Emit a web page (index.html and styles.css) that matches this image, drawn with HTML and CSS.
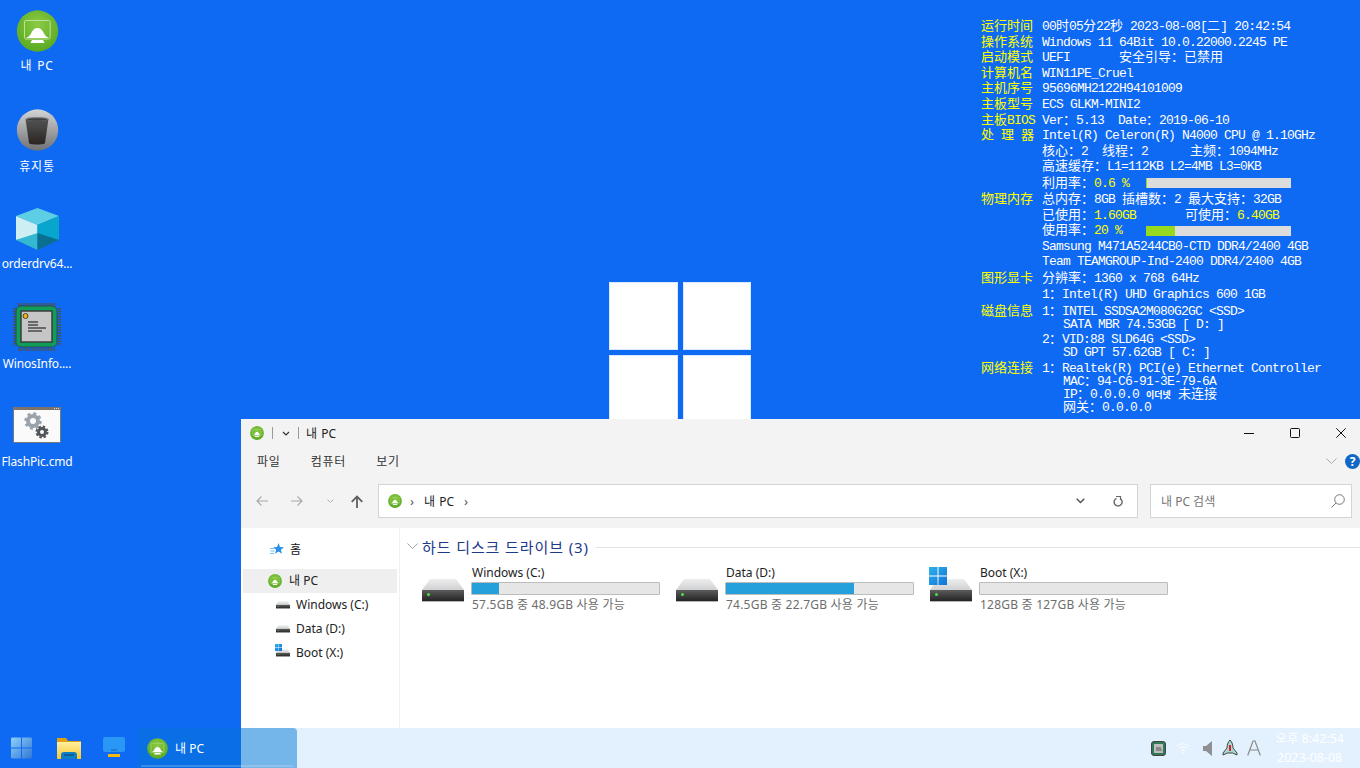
FILE: index.html
```html
<!DOCTYPE html>
<html lang="ko">
<head>
<meta charset="utf-8">
<title>내 PC</title>
<link rel="stylesheet" href="styles.css">
</head>
<body>
<svg class="sprite" xmlns="http://www.w3.org/2000/svg">
  <defs>
    <radialGradient id="gGreen" cx="50%" cy="35%" r="70%"><stop offset="0" stop-color="#8ccb45"/><stop offset="1" stop-color="#55a71f"/></radialGradient>
    <linearGradient id="gGrey" x1="0" y1="0" x2="0" y2="1"><stop offset="0" stop-color="#d2d4d6"/><stop offset="1" stop-color="#6f7174"/></linearGradient>
    <linearGradient id="gCup" x1="0" y1="0" x2="0" y2="1"><stop offset="0" stop-color="#565656"/><stop offset="1" stop-color="#2a2424"/></linearGradient>
    <linearGradient id="gTop" x1="0" y1="0" x2="0" y2="1"><stop offset="0" stop-color="#eeeeee"/><stop offset="1" stop-color="#cfd0d2"/></linearGradient>
    <linearGradient id="gBody" x1="0" y1="0" x2="0" y2="1"><stop offset="0" stop-color="#5c5c5c"/><stop offset="1" stop-color="#242424"/></linearGradient>
    <linearGradient id="gStart" x1="0" y1="0" x2="1" y2="1"><stop offset="0" stop-color="#8fd0f6"/><stop offset="1" stop-color="#2f77d8"/></linearGradient>
    <linearGradient id="gFolder" x1="0" y1="0" x2="0" y2="1"><stop offset="0" stop-color="#fff0a0"/><stop offset="1" stop-color="#fbc52c"/></linearGradient>
    <linearGradient id="gWin" x1="0" y1="0" x2="1" y2="1"><stop offset="0" stop-color="#2fb0ea"/><stop offset="1" stop-color="#0f75d8"/></linearGradient>
    <symbol id="i-pc" viewBox="0 0 42 42">
      <circle cx="21" cy="21" r="20.7" fill="url(#gGreen)"/>
      <rect x="8" y="10.500" width="25.600" height="18.500" rx="1.500" fill="none" stroke="#bfe29a" stroke-width="1"/>
      <path d="M9.500 28c2-1 3.500-1.500 5-4.500 1.500-3.500 3.500-5.500 6.500-5.500s5 2 6.500 5.500c1.500 3 3 3.500 5 4.500z" fill="#fff"/>
      <path d="M15.500 30h11l1.500 3h-14z" fill="#fff"/>
    </symbol>
    <symbol id="i-trash" viewBox="0 0 42 42">
      <circle cx="21" cy="21" r="20.7" fill="url(#gGrey)"/>
      <path d="M9 10c2-2 21-2 23 0l-3.500 24c-.5 2-15.500 2-16 0z" fill="url(#gCup)"/>
      <ellipse cx="20.500" cy="10" rx="11.500" ry="2" fill="#7c8084"/>
      <ellipse cx="20.500" cy="10.500" rx="10" ry="1.300" fill="#3d3d3d"/>
    </symbol>
    <symbol id="i-cube" viewBox="0 0 43 42">
      <path d="M21.500 0 43 8 21.500 17 0 8z" fill="#5dcfe4"/>
      <path d="M0 8 21.500 17v10L0 32z" fill="#cdeff3"/>
      <path d="M43 8 21.500 17v10L43 32z" fill="#08a6cc"/>
      <path d="M0 32 21.500 25v17z" fill="#33b8cf"/>
      <path d="M43 32 21.500 25v17z" fill="#0b708f"/>
    </symbol>
    <symbol id="i-chip" viewBox="0 0 48 48">
      <path d="M5 1.500h38M5 46.500h38M1.500 5v38M46.500 5v38" stroke="#4a5257" stroke-width="3" stroke-dasharray="1.500 1.200" fill="none"/>
      <rect x="3" y="3" width="41" height="41" rx="5" fill="#0f9d58" stroke="#33484a"/>
      <rect x="8" y="8" width="31" height="31" fill="#c6c6c6" stroke="#3c3c3c" stroke-width="1.500"/>
      <circle cx="12.500" cy="13" r="2.500" fill="#f2b705" stroke="#444"/>
      <path d="M15 19h10M15 22h10M15 25h18M15 28h14" stroke="#4a4a4a" stroke-width="1.500"/>
    </symbol>
    <symbol id="i-cmd" viewBox="0 0 48 36">
      <rect x=".5" y=".5" width="47" height="35" rx="1" fill="#fafafa" stroke="#777"/>
      <rect width="48" height="3" fill="#7b7268"/>
      <path d="M41 1.500h1M43 1.500h1M45 1.500h1" stroke="#ddd"/>
      <circle cx="20" cy="14" r="5" fill="none" stroke="#9aa3ab" stroke-width="4"/>
      <circle cx="20" cy="14" r="7.500" fill="none" stroke="#9aa3ab" stroke-width="2.500" stroke-dasharray="3 2.890"/>
      <circle cx="29" cy="25" r="3.500" fill="none" stroke="#50565b" stroke-width="3"/>
      <circle cx="29" cy="25" r="5.500" fill="none" stroke="#50565b" stroke-width="2" stroke-dasharray="2.500 1.820"/>
    </symbol>
    <symbol id="i-drive" viewBox="0 0 42 23">
      <path d="M8 0h26l8 11H0z" fill="url(#gTop)"/>
      <rect y="11" width="42" height="11" fill="url(#gBody)"/>
      <rect y="22" width="42" height="1" fill="#b5b5b5"/>
      <rect x="5" y="14" width="3" height="3" rx="1.500" fill="#4ee04a"/>
    </symbol>
    <symbol id="i-winlogo" viewBox="0 0 18 18">
      <path d="M0 0h8.500v8.500H0zM9.500 0H18v8.500H9.500zM0 9.500h8.500V18H0zM9.500 9.500H18V18H9.500z" fill="url(#gWin)"/>
    </symbol>
  </defs>
</svg>

<div class="desktop">
  <div class="stage">
    <ul class="icons">
      <li class="dicon"><svg class="dicon-img"><use href="#i-pc"/></svg><span class="ko-wide up1">내 PC</span></li>
      <li class="dicon"><svg class="dicon-img"><use href="#i-trash"/></svg><span class="ko-wide down1">휴지통</span></li>
      <li class="dicon"><svg class="dicon-img"><use href="#i-cube"/></svg><span class="up1">orderdrv64...</span></li>
      <li class="dicon"><svg class="dicon-img chip"><use href="#i-chip"/></svg><span>WinosInfo....</span></li>
      <li class="dicon"><svg class="dicon-img cmd"><use href="#i-cmd"/></svg><span class="down1">FlashPic.cmd</span></li>
    </ul>

    <div class="logo"><i></i><i></i><i></i><i></i></div>

    <div class="info" lang="zh-CN">
      <div class="row"><b><i>运行时间</i></b><span>00<i>时</i>05<i>分</i>22<i>秒</i> 2023-08-08[<i>二</i>] 20:42:54</span></div>
      <div class="row"><b><i>操作系统</i></b><span>Windows 11 64Bit 10.0.22000.2245 PE</span></div>
      <div class="row"><b><i>启动模式</i></b><span>UEFI       <i>安全引导：已禁用</i></span></div>
      <div class="row"><b><i>计算机名</i></b><span>WIN11PE_Cruel</span></div>
      <div class="row"><b><i>主机序号</i></b><span>95696MH2122H94101009</span></div>
      <div class="row"><b><i>主板型号</i></b><span>ECS GLKM-MINI2</span></div>
      <div class="row"><b><i>主板</i>BIOS</b><span>Ver<i>：</i>5.13  Date<i>：</i>2019-06-10</span></div>
      <div class="row"><b><i>处</i> <i>理</i> <i>器</i></b><span>Intel(R) Celeron(R) N4000 CPU @ 1.10GHz</span></div>
      <div class="row"><b></b><span><i>核心：</i>2  <i>线程：</i>2      <i>主频：</i>1094MHz</span></div>
      <div class="row"><b></b><span><i>高速缓存：</i>L1=112KB L2=4MB L3=0KB</span></div>
      <div class="row h17"><b></b><span class="usage"><span class="usage-text"><i>利用率：</i><em>0.6 %</em></span><span class="bar"><span class="bar-fill" style="width:0.6%"></span></span></span></div>
      <div class="row"><b><i>物理内存</i></b><span><i>总内存：</i>8GB <i>插槽数：</i>2 <i>最大支持：</i>32GB</span></div>
      <div class="row"><b></b><span><i>已使用：</i><em>1.60GB</em>       <i>可使用：</i><em>6.40GB</em></span></div>
      <div class="row"><b></b><span class="usage"><span class="usage-text"><i>使用率：</i><em>20 %</em></span><span class="bar"><span class="bar-fill" style="width:20%"></span></span></span></div>
      <div class="row"><b></b><span>Samsung M471A5244CB0-CTD DDR4/2400 4GB</span></div>
      <div class="row h17"><b></b><span>Team TEAMGROUP-Ind-2400 DDR4/2400 4GB</span></div>
      <div class="row"><b><i>图形显卡</i></b><span><i>分辨率：</i>1360 x 768 64Hz</span></div>
      <div class="row h18"><b></b><span>1<i>：</i>Intel(R) UHD Graphics 600 1GB</span></div>
      <div class="row h13"><b><i>磁盘信息</i></b><span>1<i>：</i>INTEL SSDSA2M080G2GC &lt;SSD&gt;</span></div>
      <div class="row h15"><b></b><span class="sub">SATA MBR 74.53GB [ D: ]</span></div>
      <div class="row h13"><b></b><span>2<i>：</i>VID:88 SLD64G &lt;SSD&gt;</span></div>
      <div class="row h16"><b></b><span class="sub">SD GPT 57.62GB [ C: ]</span></div>
      <div class="row h13"><b><i>网络连接</i></b><span>1<i>：</i>Realtek(R) PCI(e) Ethernet Controller</span></div>
      <div class="row h13"><b></b><span class="sub">MAC<i>：</i>94-C6-91-3E-79-6A</span></div>
      <div class="row h13"><b></b><span class="sub">IP<i>：</i>0.0.0.0 <u lang="ko">이더넷</u> <i>未连接</i></span></div>
      <div class="row h13"><b></b><span class="sub"><i>网关：</i>0.0.0.0</span></div>
    </div>

    <section class="window">
      <header class="title">
        <svg class="ic14"><use href="#i-pc"/></svg>
        <span class="vsep"></span>
        <svg class="glyph qat" viewBox="0 0 8 5"><path d="M1 1l3 3 3-3" fill="none" stroke="#333" stroke-width="1.200"/></svg>
        <span class="vsep"></span>
        <span class="title-text">내 PC</span>
        <div class="controls">
          <svg class="ctl" viewBox="0 0 10 10"><path d="M0 5.500h10" stroke="#111" stroke-width="1"/></svg>
          <svg class="ctl" viewBox="0 0 10 10"><rect x=".5" y=".5" width="9" height="9" rx="1" fill="none" stroke="#111"/></svg>
          <svg class="ctl" viewBox="0 0 10 10"><path d="M.3.3l9.400 9.400M9.700.3L.3 9.700" stroke="#111" stroke-width="1"/></svg>
        </div>
      </header>
      <nav class="menu">
        <span class="menu-dark">파일</span><span>컴퓨터</span><span>보기</span>
        <div class="menu-right">
          <svg class="collapse" viewBox="0 0 11 6"><path d="M.5.500l5 5 5-5" fill="none" stroke="#a9a9a9"/></svg>
          <span class="help">?</span>
        </div>
      </nav>
      <div class="navbar">
        <svg class="arrow" viewBox="0 0 12 10"><path d="M12 5H1M5.500.500L1 5l4.500 4.500" fill="none" stroke="#a8a8a8" stroke-width="1.100"/></svg>
        <svg class="arrow fwd" viewBox="0 0 12 10"><path d="M0 5h11M6.500.500L11 5 6.500 9.500" fill="none" stroke="#a8a8a8" stroke-width="1.100"/></svg>
        <svg class="mini" viewBox="0 0 7 4"><path d="M.5.500l3 3 3-3" fill="none" stroke="#b0b0b0"/></svg>
        <svg class="arrow up" viewBox="0 0 12 13"><path d="M6 13V1.500M.7 6.800L6 1.500l5.300 5.300" fill="none" stroke="#5f5f5f" stroke-width="1.800"/></svg>
        <div class="address">
          <svg class="ic14"><use href="#i-pc"/></svg>
          <span class="crumb-sep">›</span><span class="crumb">내 PC</span><span class="crumb-sep">›</span>
          <div class="address-right">
            <svg class="addr-drop" viewBox="0 0 9 6"><path d="M.7.700L4.500 4.500 8.300.700" fill="none" stroke="#555" stroke-width="1.500"/></svg>
            <svg class="addr-refresh" viewBox="0 0 10 11"><path d="M7.800 3A4 4 0 1 1 3.500 2.300" fill="none" stroke="#666" stroke-width="1.400"/><path d="M3 .5h4.500V4" fill="none" stroke="#666" stroke-width="1.200"/></svg>
          </div>
        </div>
        <div class="search">
          <span>내 PC 검색</span>
          <svg class="search-ic" viewBox="0 0 14 14"><circle cx="8.500" cy="5.500" r="4.800" fill="none" stroke="#777"/><path d="M5 9l-4.500 4.500" stroke="#777"/></svg>
        </div>
      </div>
      <div class="body">
        <aside class="side">
          <div class="side-row home">
            <svg class="star" viewBox="0 0 14 13"><path d="M8.500 0l1.500 4 4 .3-3.100 2.500 1 4-3.400-2.300-3.400 2.300 1-4-3-2.500 4-.3z" fill="#2a8fe6"/><path d="M0 5.500h4M.5 8h4M0 10.500h4" stroke="#7cc0f0"/></svg>
            <span>홈</span>
          </div>
          <div class="side-row pc selected"><svg class="ic14"><use href="#i-pc"/></svg><span>내 PC</span></div>
          <div class="side-row drv"><svg class="drv-ic"><use href="#i-drive"/></svg><span>Windows (C:)</span></div>
          <div class="side-row drv"><svg class="drv-ic"><use href="#i-drive"/></svg><span>Data (D:)</span></div>
          <div class="side-row drv boot"><svg class="side-win" viewBox="0 0 18 18"><use href="#i-winlogo"/></svg><svg class="drv-ic"><use href="#i-drive"/></svg><span>Boot (X:)</span></div>
        </aside>
        <main class="main">
          <div class="group">
            <svg class="group-chev" viewBox="0 0 11 6"><path d="M.5.500l5 5 5-5" fill="none" stroke="#a0a0a0"/></svg>
            <span class="group-name">하드 디스크 드라이브 (3)</span>
            <span class="group-line"></span>
          </div>
          <div class="tiles">
            <article class="tile">
              <svg class="tile-ic"><use href="#i-drive"/></svg>
              <div class="tile-text"><div class="tile-name">Windows (C:)</div><div class="meter"><div class="meter-fill" style="width:14.500%"></div></div><div class="tile-cap">57.5GB 중 48.9GB 사용 가능</div></div>
            </article>
            <article class="tile">
              <svg class="tile-ic"><use href="#i-drive"/></svg>
              <div class="tile-text"><div class="tile-name">Data (D:)</div><div class="meter"><div class="meter-fill" style="width:68.700%"></div></div><div class="tile-cap">74.5GB 중 22.7GB 사용 가능</div></div>
            </article>
            <article class="tile">
              <svg class="tile-win"><use href="#i-winlogo"/></svg>
              <svg class="tile-ic"><use href="#i-drive"/></svg>
              <div class="tile-text"><div class="tile-name">Boot (X:)</div><div class="meter"></div><div class="tile-cap">128GB 중 127GB 사용 가능</div></div>
            </article>
          </div>
        </main>
      </div>
    </section>
  </div>

  <footer class="taskbar">
    <div class="tb-left">
      <svg class="tb-start" viewBox="0 0 22 22"><path d="M0 1.500A1.500 1.500 0 0 1 1.500 0h9v10.500H0zM11.500 0h9A1.500 1.500 0 0 1 22 1.500v9H11.500zM0 11.500h10.500V22h-9A1.500 1.500 0 0 1 0 20.500zM11.500 11.500H22v9a1.500 1.500 0 0 1-1.500 1.500h-9z" fill="url(#gStart)"/></svg>
      <svg class="tb-ic tb-folder" viewBox="0 0 24 22"><path d="M0 1h9l2 3h13v18H0z" fill="#e0a010"/><path d="M0 5h24v17H0z" fill="url(#gFolder)"/><path d="M4 22v-4a3 3 0 0 1 3-3h10a3 3 0 0 1 3 3v4z" fill="#0f7ec4"/><path d="M7 18h10" stroke="#0a3f6e"/></svg>
      <svg class="tb-ic tb-desk" viewBox="0 0 22 22"><rect width="22" height="15" rx="2" fill="#2897f5"/><path d="M8 13h6" stroke="#1d5fb0"/><rect x="5" y="17" width="12" height="3" fill="#f2b90f"/></svg>
    </div>
    <div class="tb-app">
      <svg class="tb-app-ic"><use href="#i-pc"/></svg>
      <span>내 PC</span>
    </div>
    <div class="tray">
      <svg class="tray-ic" viewBox="0 0 15 15"><rect x=".5" y=".5" width="14" height="14" rx="2.500" fill="#2f7a58" stroke="#444"/><rect x="3" y="3" width="9" height="9" fill="#bdbdbd"/><path d="M5 7h5M5 9h6" stroke="#555"/></svg>
      <svg class="tray-ic wifi" viewBox="0 0 16 13"><path d="M1 4.500a10 10 0 0 1 14 0M3.500 7a6.500 6.500 0 0 1 9 0M6 9.500a3 3 0 0 1 4 0" fill="none" stroke="#fff" stroke-width="1.200"/><circle cx="8" cy="11.500" r="1" fill="#fff"/></svg>
      <svg class="tray-ic sound" viewBox="0 0 9 15"><path d="M0 5h3l6-5v15l-6-5H0z" fill="#8d8f91"/></svg>
      <svg class="tray-ic rocket" viewBox="0 0 16 16"><path d="M8 0c2.500 2.500 3 5.500 3 8l4 5v2l-4.500-2h-5L1 15v-2l4-5c0-2.500.5-5.500 3-8z" fill="#a9d8cf" stroke="#222" stroke-width=".8"/><path d="M7 5h2v6H7z" fill="#e0202a"/></svg>
      <svg class="tray-ic aglyph" viewBox="0 0 14 16"><path d="M.7 15.500L6 1h2l5.300 14.500M3 10h8" fill="none" stroke="#8a8a8a" stroke-width="1.200"/></svg>
      <div class="clock"><span>오후 8:42:54</span><span>2023-08-08</span></div>
    </div>
  </footer>
</div>
</body>
</html>
```
FILE: styles.css
```css
* { box-sizing: border-box; }
html, body { margin: 0; padding: 0; }
body {
  width: 1360px;
  height: 768px;
  overflow: hidden;
  background: #0e69f3;
  font-family: "Noto Sans", "Noto Sans CJK KR", sans-serif;
  font-size: 12px;
  color: #222;
}
svg { display: block; flex: none; }
.sprite { position: absolute; width: 0; height: 0; }

.desktop { display: flex; flex-direction: column; width: 1360px; height: 768px; }
.stage { position: relative; height: 728px; flex: none; }

/* desktop icons */
.icons { list-style: none; margin: 0; padding: 10px 0 0; width: 74px; display: flex; flex-direction: column; }
.dicon { height: 99px; display: flex; flex-direction: column; align-items: center; color: #fff; line-height: 17px; white-space: nowrap; }
.dicon-img { width: 43px; height: 42px; margin-bottom: 5px; }
.dicon-img.chip { width: 48px; height: 48px; margin-top: -4px; margin-bottom: 3px; }
.dicon-img.cmd { width: 48px; height: 36px; margin-bottom: 8px; margin-top: 1px; }
.dicon span { margin-top: 1px; letter-spacing: -.15px; }
.dicon .up1 { margin-top: 0; }
.dicon .down1 { margin-top: 2px; }
.dicon .ko-wide { letter-spacing: .8px; word-spacing: 1px; }

/* centre boot logo */
.logo { position: absolute; left: 609px; top: 282px; display: grid; grid-template-columns: 69px 68px; grid-template-rows: 68px 68px; gap: 5px; }
.logo i { background: #fff; box-shadow: inset 0 0 0 1px #d8e8ff; }

/* system info overlay */
.info {
  position: absolute;
  left: 981px;
  top: 19px;
  display: flex;
  flex-direction: column;
  font-family: "Liberation Mono", "Noto Sans CJK SC", monospace;
  font-size: 13px;
  letter-spacing: -.8px;
  color: #fff;
  white-space: pre;
}
.row { display: grid; grid-template-columns: 61px 1fr; height: 15.6px; line-height: 15.6px; flex: none; }
.row.h17 { height: 17px; }
.row.h18 { height: 18.5px; }
.row.h13 { height: 13px; line-height: 13px; }
.row.h15 { height: 15px; line-height: 13px; }
.row.h16 { height: 16px; line-height: 13px; }
.row b { font-weight: 400; color: #ff0; }
.row i { font-family: "Noto Sans CJK SC", sans-serif; font-style: normal; font-size: 13px; letter-spacing: 0; line-height: 0; }
.row em { font-style: normal; color: #ff0; }
.row u { font-family: "Noto Sans CJK KR", sans-serif; text-decoration: none; font-size: 9px; font-weight: 700; letter-spacing: 0; line-height: 0; }
.sub { padding-left: 21px; }
.usage { display: flex; align-items: center; }
.usage-text { width: 104px; }
.bar { width: 145px; height: 10px; background: #dcdcdc; }
.bar-fill { display: block; height: 100%; background: #97d91f; }

/* explorer window */
.window {
  position: absolute;
  left: 241px;
  top: 419px;
  width: 1119px;
  height: 309px;
  background: #f3f3f3;
  overflow: hidden;
  display: flex;
  flex-direction: column;
}
.title { height: 28px; display: flex; align-items: center; padding-left: 9px; flex: none; }
.ic14 { width: 14px; height: 14px; }
.vsep { width: 1px; height: 12px; background: #9a9a9a; margin-left: 8px; }
.qat { width: 8px; height: 5px; margin-left: 9px; margin-right: -4px; }
.qat + .vsep { margin-left: 12px; }
.title-text { margin-left: 7px; word-spacing: 1px; }
.controls { margin-left: auto; display: flex; gap: 36px; padding-right: 14px; margin-top: -1px; }
.ctl { width: 10px; height: 10px; }

.menu { height: 28px; display: flex; align-items: center; padding-left: 16px; flex: none; color: #333; }
.menu > span { margin-right: 30px; letter-spacing: .8px; }
.menu-right { margin-left: auto; display: flex; align-items: center; gap: 8px; }
.collapse { width: 11px; height: 6px; }
.help { width: 15px; height: 15px; border-radius: 50%; background: #1267c4; color: #fff; font-weight: 700; font-size: 12px; line-height: 15px; text-align: center; }

.navbar { height: 53px; display: flex; align-items: flex-start; padding-top: 9px; flex: none; }
.arrow { width: 12px; height: 10px; margin-top: 12px; margin-left: 15px; }
.arrow.fwd { margin-left: 23px; }
.mini { width: 7px; height: 4px; margin-top: 15px; margin-left: 24px; }
.arrow.up { height: 13px; margin-left: 17px; margin-top: 11px; }
.address {
  margin-left: 15px;
  width: 760px;
  height: 34px;
  background: #fff;
  border: 1px solid #d4d4d4;
  display: flex;
  align-items: center;
  padding-left: 9px;
}
.crumb-sep { margin-left: 8px; color: #555; font-size: 13px; }
.crumb { margin-left: 10px; margin-right: 2px; word-spacing: 1px; }
.address-right { margin-left: auto; display: flex; align-items: center; gap: 28px; padding-right: 14px; }
.addr-drop { width: 9px; height: 6px; }
.addr-refresh { width: 10px; height: 11px; }
.search {
  margin-left: 12px;
  width: 202px;
  height: 34px;
  background: #fff;
  border: 1px solid #d4d4d4;
  display: flex;
  align-items: center;
  justify-content: space-between;
  padding: 0 6px 0 10px;
  color: #767676;
}
.search-ic { width: 14px; height: 14px; }

.body { flex: 1; display: flex; background: #fff; min-height: 0; }
.side { width: 159px; border-right: 1px solid #f0f0f0; padding: 9px 1px 0 2px; flex: none; }
.side-row { height: 24px; display: flex; align-items: center; position: relative; width: 154px; }
.side-row span { margin-top: -2px; }
.home { padding-left: 27px; gap: 6px; margin-bottom: 8px; color: #111; }
.home span { margin-top: 0; }
.star { width: 14px; height: 13px; }
.pc { padding-left: 25px; gap: 7px; }
.selected { background: #efefef; }
.drv { padding-left: 33px; gap: 6px; }
.drv-ic { width: 14px; height: 8px; }
.side-win { position: absolute; left: 32px; top: 3px; width: 7px; height: 7px; }

.main { flex: 1; padding-left: 7px; min-width: 0; }
.group { height: 36px; display: flex; align-items: center; }
.group-chev { width: 11px; height: 6px; }
.group-name { margin-left: 4px; font-size: 15px; letter-spacing: .9px; color: #1c3a8c; white-space: nowrap; }
.group-line { flex: 1; height: 1px; background: #e3e3e3; margin: 2px 0 0 7px; }
.tiles { display: grid; grid-template-columns: repeat(3, 254px); padding-left: 15px; }
.tile { display: flex; gap: 7px; position: relative; }
.tile-ic { width: 42px; height: 23px; margin-top: 15px; }
.tile-win { position: absolute; left: -1px; top: 3px; width: 18px; height: 18px; z-index: 1; }
.tile-text { width: 190px; }
.tile-name { line-height: 17px; height: 17px; margin-left: 1px; color: #222; }
.meter { width: 189px; height: 13px; margin-top: 1px; background: #e6e6e6; border: 1px solid #bcbcbc; border-radius: 1px; }
.meter-fill { height: 100%; background: #26a0da; }
.tile-cap { line-height: 17px; margin-top: 1px; margin-left: 1px; color: #6d6d6d; letter-spacing: .22px; }

/* taskbar */
.taskbar {
  height: 40px;
  flex: none;
  display: flex;
  align-items: stretch;
  background: linear-gradient(to right, transparent 241px, #e3f1fe 241px);
}
.tb-left { width: 138px; display: flex; align-items: center; flex: none; padding-left: 11px; }
.tb-start { width: 21px; height: 22px; }
.tb-ic { width: 24px; height: 22px; }
.tb-folder { margin-left: 25px; }
.tb-desk { width: 22px; margin-left: 22px; }
.tb-app {
  width: 159px;
  display: flex;
  align-items: center;
  gap: 7px;
  padding-left: 9px;
  color: #fff;
  position: relative;
  border-top-right-radius: 4px;
  background: linear-gradient(to right, #0a6fe5 103px, #74b5ea 103px);
}
.tb-app::after { content: ""; position: absolute; left: 3px; right: 4px; bottom: 1px; height: 2px; background: rgba(255, 255, 255, .2); }
.tb-app-ic { width: 21px; height: 21px; }
.tray { flex: 1; display: flex; align-items: center; justify-content: flex-end; padding-right: 16px; }
.tray-ic { width: 15px; height: 15px; margin-right: 10px; }
.wifi { width: 14px; height: 12px; opacity: .8; margin-right: 13px; }
.sound { width: 9px; height: 15px; margin-right: 10px; }
.rocket { width: 16px; height: 16px; margin-right: 9px; }
.aglyph { width: 14px; height: 16px; margin-right: 14px; }
.clock { display: flex; flex-direction: column; align-items: center; color: #fff; line-height: 19px; font-size: 12.5px; }
```
